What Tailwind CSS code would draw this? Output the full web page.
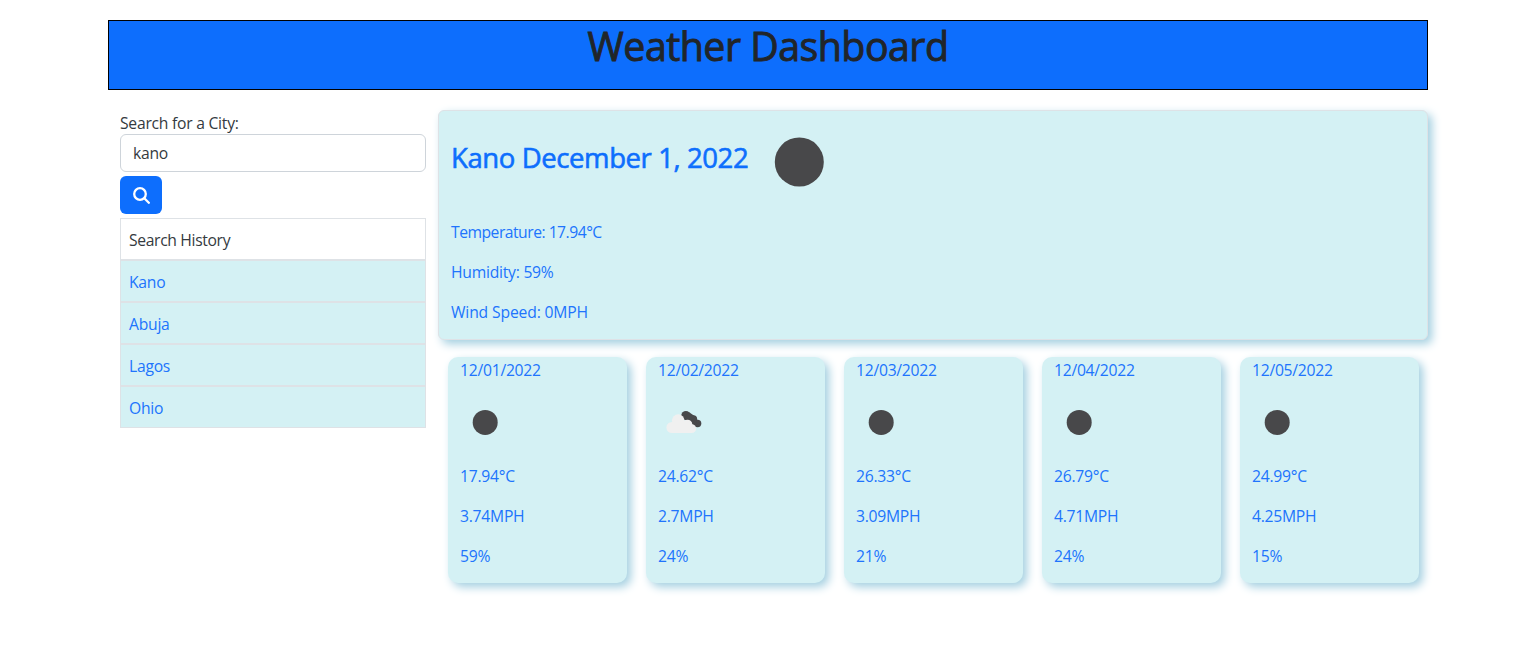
<!DOCTYPE html>
<html lang="en">
<head>
<meta charset="utf-8">
<title>Weather Dashboard</title>
<script src="https://cdn.jsdelivr.net/npm/@tailwindcss/browser@4"></script>
</head>
<body class="h-[656px] overflow-hidden bg-white font-['Segoe_UI','Open_Sans',sans-serif] text-[15.7px] leading-6 tracking-[-0.25px] text-[#343a40]">
<div class="mx-auto w-[1320px] pt-5">
  <header class="h-[70px] border border-black bg-[#0d6efd] pt-px text-center text-[#212529]">
    <h1 class="text-[39.3px] leading-12 font-medium tracking-[-0.5px] [-webkit-text-stroke:0.9px_#212529]">Weather Dashboard</h1>
  </header>
  <div class="flex pt-5">
    <aside class="w-[330px] shrink-0 px-3 pt-px">
      <label for="city" class="block">Search for a City:</label>
      <input id="city" value="kano" class="-mt-px block h-[38px] w-[306px] rounded-md border border-[#ced4da] px-3 tracking-[-0.25px]">
      <button class="mt-1 flex h-[38px] w-[42px] items-center justify-center rounded-md bg-[#0d6efd]" aria-label="Search">
        <svg class="size-[17px]" viewBox="0 0 17 17" fill="none" stroke="#fff" stroke-width="2.3" stroke-linecap="round"><circle cx="7" cy="7" r="5.8"/><path d="M11.3 11.3L15.8 15.8"/></svg>
      </button>
      <ul class="mt-1 w-[306px] border border-[#dee2e6]">
        <li class="h-10 px-2 pt-[9px] tracking-[-0.35px]">Search History</li>
        <li class="h-[42px] border-t-2 border-[#dee2e6] bg-[#d4f1f4] px-2 pt-[9px] text-[#2074fd]">Kano</li>
        <li class="h-[42px] border-t-2 border-[#dee2e6] bg-[#d4f1f4] px-2 pt-[9px] text-[#2074fd]">Abuja</li>
        <li class="h-[42px] border-t-2 border-[#dee2e6] bg-[#d4f1f4] px-2 pt-[9px] text-[#2074fd]">Lagos</li>
        <li class="h-[42px] border-t-2 border-[#dee2e6] bg-[#d4f1f4] px-2 pt-[9px] text-[#2074fd]">Ohio</li>
      </ul>
    </aside>
    <main class="w-[990px] text-[#2074fd]">
      <section class="h-[230px] rounded-md border border-[#dee2e6] bg-[#d4f1f4] px-3 pt-px shadow-[4px_4px_10px_#a3cfe0]">
        <div class="flex h-[100px]">
          <h2 class="w-[298px] pt-[29px] text-[27.5px] leading-[34px] font-medium tracking-[-0.4px] whitespace-nowrap text-[#0d6efd] [-webkit-text-stroke:0.6px_#0d6efd]">Kano December 1, 2022</h2>
          <svg class="size-[100px]" viewBox="0 0 100 100"><circle cx="50.3" cy="50" r="24.5" fill="#48484a"/></svg>
        </div>
        <div class="flex flex-col gap-4 pt-2">
          <p class="tracking-[-0.5px]">Temperature: 17.94°C</p>
          <p>Humidity: 59%</p>
          <p class="tracking-[-0.15px]">Wind Speed: 0MPH</p>
        </div>
      </section>
      <section class="flex gap-[19.3px] px-[10px] pt-[17px]">
        <article class="h-[226px] w-[178.7px] shrink-0 rounded-[10px] bg-[#d4f1f4] px-3 pt-px shadow-[4px_4px_10px_#a3cfe0]">
          <p>12/01/2022</p>
          <svg class="mt-[15px] size-[50px]" viewBox="0 0 50 50"><circle cx="25.2" cy="25.4" r="12.5" fill="#48484a"/></svg>
          <div class="flex flex-col gap-4 pt-[17px]"><p>17.94°C</p><p>3.74MPH</p><p>59%</p></div>
        </article>
        <article class="h-[226px] w-[178.7px] shrink-0 rounded-[10px] bg-[#d4f1f4] px-3 pt-px shadow-[4px_4px_10px_#a3cfe0]">
          <p>12/02/2022</p>
          <svg class="mt-[15px] size-[50px]" viewBox="0 0 50 50"><g fill="#48484a"><circle cx="27.9" cy="18.5" r="4.6"/><circle cx="35.2" cy="22.2" r="4"/><circle cx="39.6" cy="26.5" r="3.7"/><path d="M25 21L31.5 15.500L38 20L39.500 30L35 28Z"/></g><g fill="#f0f0f0"><circle cx="20.2" cy="23.6" r="6.3"/><circle cx="14" cy="30.500" r="5.6"/><circle cx="29.500" cy="27.500" r="4.8"/><circle cx="33.700" cy="31.700" r="4.4"/><path d="M14 25H29V27H34V36.100H14Z"/></g></svg>
          <div class="flex flex-col gap-4 pt-[17px]"><p>24.62°C</p><p>2.7MPH</p><p>24%</p></div>
        </article>
        <article class="h-[226px] w-[178.7px] shrink-0 rounded-[10px] bg-[#d4f1f4] px-3 pt-px shadow-[4px_4px_10px_#a3cfe0]">
          <p>12/03/2022</p>
          <svg class="mt-[15px] size-[50px]" viewBox="0 0 50 50"><circle cx="25.2" cy="25.4" r="12.5" fill="#48484a"/></svg>
          <div class="flex flex-col gap-4 pt-[17px]"><p>26.33°C</p><p>3.09MPH</p><p>21%</p></div>
        </article>
        <article class="h-[226px] w-[178.7px] shrink-0 rounded-[10px] bg-[#d4f1f4] px-3 pt-px shadow-[4px_4px_10px_#a3cfe0]">
          <p>12/04/2022</p>
          <svg class="mt-[15px] size-[50px]" viewBox="0 0 50 50"><circle cx="25.2" cy="25.4" r="12.5" fill="#48484a"/></svg>
          <div class="flex flex-col gap-4 pt-[17px]"><p>26.79°C</p><p>4.71MPH</p><p>24%</p></div>
        </article>
        <article class="h-[226px] w-[178.7px] shrink-0 rounded-[10px] bg-[#d4f1f4] px-3 pt-px shadow-[4px_4px_10px_#a3cfe0]">
          <p>12/05/2022</p>
          <svg class="mt-[15px] size-[50px]" viewBox="0 0 50 50"><circle cx="25.2" cy="25.4" r="12.5" fill="#48484a"/></svg>
          <div class="flex flex-col gap-4 pt-[17px]"><p>24.99°C</p><p>4.25MPH</p><p>15%</p></div>
        </article>
      </section>
    </main>
  </div>
</div>
</body>
</html>
